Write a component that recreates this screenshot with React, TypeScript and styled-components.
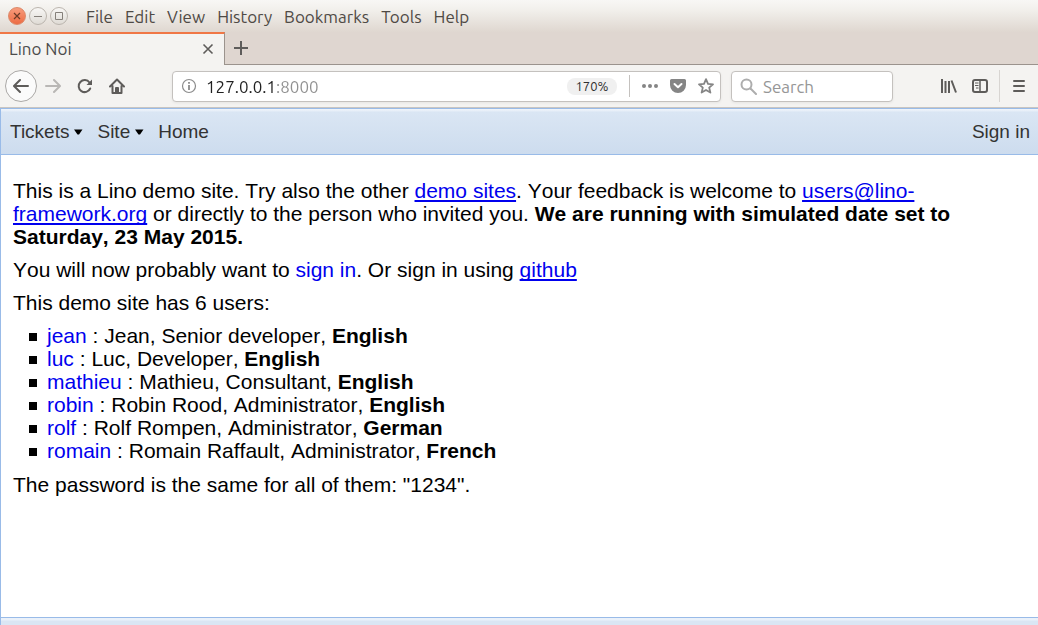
import React from "react";
import styled, { createGlobalStyle } from "styled-components";

const GlobalStyle = createGlobalStyle`
  * { box-sizing: border-box; }
  body { margin: 0; background: #fff; }
  button, input { font: inherit; color: inherit; }
`;

const uiFont = `"Ubuntu", "Noto Sans", sans-serif`;

const Window = styled.div`
  min-height: 100vh;
  display: flex;
  flex-direction: column;
  font-family: ${uiFont};
  font-size: 17px;
  line-height: 20px;
`;

const TitleBar = styled.header`
  height: 32px;
  display: flex;
  align-items: center;
  padding-left: 8px;
  background: linear-gradient(#f8f7f5, #f2f0ec 30%, #dfd7d0);
`;

const WindowButtons = styled.div`
  display: flex;
  gap: 3px;
  margin-right: 12px;
`;

const WindowButton = styled.button<{ $close?: boolean }>`
  width: 18px;
  height: 18px;
  padding: 0;
  display: grid;
  place-items: center;
  border: 1px solid ${(p) => (p.$close ? "#dc8868" : "#bbb5ae")};
  border-radius: 50%;
  color: ${(p) => (p.$close ? "#6b3a26" : "#85807a")};
  background: ${(p) =>
    p.$close ? "linear-gradient(#f79b7c, #ed6c43)" : "linear-gradient(#f8f7f5, #dfdbd5)"};
`;

const MenuBar = styled.nav`
  display: flex;
  align-items: center;
`;

const MenuItem = styled.button`
  border: 0;
  background: none;
  padding: 2px 6px 0;
  color: #4f4a45;
`;

const TabStrip = styled.div`
  height: 33px;
  display: flex;
  background: #dfd6d0;
`;

const Tab = styled.div`
  width: 225px;
  display: flex;
  align-items: center;
  justify-content: space-between;
  padding: 0 10px 1px 9px;
  border-top: 2px solid #f07746;
  border-right: 1px solid #9b938d;
  background: #f4f3f1;
  color: #4c4c4c;
`;

const StripRest = styled.div`
  flex: 1;
  display: flex;
  align-items: center;
  padding-left: 8px;
  border-bottom: 1px solid #9b938d;
`;

const IconButton = styled.button<{ $faded?: boolean }>`
  border: 0;
  padding: 0;
  background: none;
  display: grid;
  place-items: center;
  color: ${(p) => (p.$faded ? "#b9b7b5" : "#5e5c5a")};
`;

const NavBar = styled.div`
  height: 43px;
  display: flex;
  align-items: center;
  padding: 0 10px 0 5px;
  background: #f4f3f1;
  border-bottom: 1px solid #c9c5c1;
`;

const NavButtons = styled.div`
  display: flex;
  align-items: center;
  gap: 16px;
  width: 167px;
`;

const BackButton = styled(IconButton)`
  width: 32px;
  height: 32px;
  margin-right: -8px;
  border: 1px solid #aaa8a6;
  border-radius: 50%;
  background: #fbfbfb;
`;

const Field = styled.div`
  height: 31px;
  display: flex;
  align-items: center;
  border: 1px solid #c4c1be;
  border-radius: 4px;
  background: #fff;
  box-shadow: 0 1px 3px rgba(0, 0, 0, 0.06);
  color: #8b8b8b;
`;

const UrlField = styled(Field)`
  flex: 1;
  padding: 0 6px 0 8px;
`;

const SearchField = styled(Field)`
  width: 162px;
  margin: 0 47px 0 10px;
  padding-left: 8px;
`;

const TextInput = styled.input`
  flex: 1;
  min-width: 0;
  border: 0;
  outline: 0;
  padding: 1px 0 0;
  height: 25px;
  background: none;
  &::placeholder { color: #969696; opacity: 1; }
`;

const UrlInput = styled(TextInput)`
  margin-left: 9px;
  background: linear-gradient(90deg, #202020 70px, #909090 70px);
  background-clip: text;
  color: transparent;
  caret-color: #303030;
`;

const SearchInput = styled(TextInput)`
  margin-left: 6px;
`;

const Zoom = styled.button`
  height: 17px;
  width: 50px;
  margin-right: 12px;
  padding: 0;
  border: 0;
  border-radius: 8px;
  background: #f0f0f0;
  color: #303030;
  font-size: 13px;
  line-height: 17px;
`;

const Actions = styled.div`
  height: 22px;
  display: flex;
  align-items: center;
  gap: 12px;
  padding-left: 12px;
  border-left: 1px solid #c4c1be;
  button { color: #858585; }
`;

const Tools = styled.div`
  display: flex;
  align-items: center;
  gap: 14px;
`;

const MenuSlot = styled.div`
  height: 32px;
  display: flex;
  align-items: center;
  padding-left: 10px;
  margin-left: -3px;
  border-left: 1px solid #d8d5d2;
`;

const Page = styled.div`
  flex: 1;
  display: flex;
  flex-direction: column;
  border-left: 1px solid #99bbe8;
  border-top: 1px solid #99bbe8;
  font-family: "Liberation Sans", Arial, sans-serif;
  color: #000;
`;

const SiteBar = styled.nav`
  height: 46px;
  display: flex;
  align-items: center;
  gap: 14px;
  padding: 0 8px 0 9px;
  border-bottom: 1px solid #99bbe8;
  background: linear-gradient(#f0f5fb 0, #e6eef8 2px, #dae6f4 3px, #cddcee);
  font-size: 19px;
  line-height: 24px;
  color: #333;
`;

const SiteItem = styled.button`
  display: flex;
  align-items: center;
  gap: 4px;
  border: 0;
  padding: 0;
  background: none;
`;

const Spacer = styled.div`
  flex: 1;
`;

const Content = styled.main`
  flex: 1;
  padding: 24px 60px 0 12px;
  font-size: 21px;
  line-height: 23px;
  font-kerning: none;
`;

const Paragraph = styled.p`
  margin: 0 0 10px;
`;

const Link = styled.a<{ $plain?: boolean }>`
  color: #0000ee;
  text-decoration: ${(p) => (p.$plain ? "none" : "underline")};
  text-decoration-thickness: 2px;
  text-decoration-skip-ink: none;
  text-underline-offset: 2px;
`;

const UserList = styled.ul`
  margin: 0 0 11px;
  padding: 0;
  list-style: none;
`;

const User = styled.li`
  display: flex;
  align-items: center;
  padding-left: 16px;
  &::before {
    content: "";
    width: 8px;
    height: 8px;
    margin: 2px 10px 0 0;
    background: #000;
  }
`;

const BottomBar = styled.footer`
  height: 8px;
  border-top: 1px solid #99bbe8;
  background: linear-gradient(#eaf1fa 2px, #dae6f4 3px);
`;

const Svg = ({ size = 16, children }: { size?: number; children: React.ReactNode }) => (
  <svg width={size} height={size} viewBox={`0 0 ${size} ${size}`} fill="none" stroke="currentColor"
    strokeWidth="2" strokeLinecap="round" strokeLinejoin="round" aria-hidden="true">
    {children}
  </svg>
);

const Caret = () => (
  <svg width="10" height="6" viewBox="0 0 10 6" aria-hidden="true">
    <path d="M1 0.500h8.500L6 5.500H4.500z" fill="#000" />
  </svg>
);

const menus = ["File", "Edit", "View", "History", "Bookmarks", "Tools", "Help"];

const users = [
  { login: "jean", about: "Jean, Senior developer", language: "English" },
  { login: "luc", about: "Luc, Developer", language: "English" },
  { login: "mathieu", about: "Mathieu, Consultant", language: "English" },
  { login: "robin", about: "Robin Rood, Administrator", language: "English" },
  { login: "rolf", about: "Rolf Rompen, Administrator", language: "German" },
  { login: "romain", about: "Romain Raffault, Administrator", language: "French" },
];

export default function App() {
  return (
    <Window>
      <GlobalStyle />
      <TitleBar>
        <WindowButtons>
          <WindowButton $close aria-label="Close window">
            <svg width="8" height="8" viewBox="0 0 8 8"><path d="M1 1l6 6M7 1L1 7" stroke="currentColor" strokeWidth="1.2" /></svg>
          </WindowButton>
          <WindowButton aria-label="Minimize window">
            <svg width="8" height="8" viewBox="0 0 8 8"><path d="M0 4.5h8" stroke="currentColor" /></svg>
          </WindowButton>
          <WindowButton aria-label="Maximize window">
            <svg width="8" height="8" viewBox="0 0 8 8"><path d="M.5.5h7v7h-7z" stroke="currentColor" fill="none" /></svg>
          </WindowButton>
        </WindowButtons>
        <MenuBar>
          {menus.map((m) => <MenuItem key={m}>{m}</MenuItem>)}
        </MenuBar>
      </TitleBar>

      <TabStrip>
        <Tab>
          Lino Noi
          <IconButton aria-label="Close tab">
            <svg width="12" height="12" viewBox="0 0 12 12"><path d="M1.5 1.5l9 9M10.5 1.5l-9 9" stroke="currentColor" strokeWidth="1.6" /></svg>
          </IconButton>
        </Tab>
        <StripRest>
          <IconButton aria-label="New tab">
            <svg width="16" height="16" viewBox="0 0 16 16"><path d="M8 1v14M1 8h14" stroke="currentColor" strokeWidth="2" /></svg>
          </IconButton>
        </StripRest>
      </TabStrip>

      <NavBar>
        <NavButtons>
          <BackButton aria-label="Back"><Svg><path d="M15 8H1.5M7 2L1 8l6 6" /></Svg></BackButton>
          <IconButton $faded aria-label="Forward"><Svg><path d="M1 8h13.500M9 2l6 6-6 6" /></Svg></IconButton>
          <IconButton aria-label="Reload">
            <Svg><path d="M13.200 10.500A6 6 0 1 1 12.500 4.500" /><path d="M15 1.500V7H9.500z" fill="currentColor" stroke="none" /></Svg>
          </IconButton>
          <IconButton aria-label="Home">
            <Svg><path d="M1 8.500L8 1.500l7 7M3.500 8v7h9V8" /><path d="M7 14v-4h2v4" /></Svg>
          </IconButton>
        </NavButtons>
        <UrlField>
          <svg width="16" height="16" viewBox="0 0 16 16" fill="none" stroke="currentColor" aria-hidden="true">
            <circle cx="8" cy="8" r="6.500" strokeWidth="1.200" /><path d="M8 7v5M8 4v1.800" strokeWidth="1.800" />
          </svg>
          <UrlInput aria-label="Address" defaultValue="127.0.0.1:8000" />
          <Zoom>170%</Zoom>
          <Actions>
            <IconButton aria-label="Page actions">
              <svg width="16" height="16" viewBox="0 0 16 16" fill="currentColor"><circle cx="2" cy="8" r="2" /><circle cx="8" cy="8" r="2" /><circle cx="14" cy="8" r="2" /></svg>
            </IconButton>
            <IconButton aria-label="Save to Pocket">
              <svg width="16" height="16" viewBox="0 0 16 16"><path d="M1.500 1h13A1.500 1.500 0 0 1 16 2.500V7A8 8 0 0 1 0 7V2.500A1.500 1.500 0 0 1 1.500 1z" fill="currentColor" /><path d="M4.500 6L8 9.200 11.500 6" fill="none" stroke="#fff" strokeWidth="2" strokeLinecap="round" strokeLinejoin="round" /></svg>
            </IconButton>
            <IconButton aria-label="Bookmark this page">
              <svg width="16" height="16" viewBox="0 0 16 16" fill="none" stroke="currentColor" strokeWidth="1.800" strokeLinejoin="round"><path d="M8 1.200l2 4.600 5 .5-3.800 3.300 1.200 5L8 12l-4.400 2.600 1.200-5L1 6.300l5-.5z" /></svg>
            </IconButton>
          </Actions>
        </UrlField>
        <SearchField>
          <svg width="17" height="17" viewBox="0 0 17 17" fill="none" stroke="#adadad" strokeWidth="2" strokeLinecap="round" aria-hidden="true">
            <circle cx="6.500" cy="6.500" r="5" /><path d="M10.500 10.500L16 16" />
          </svg>
          <SearchInput aria-label="Search" placeholder="Search" />
        </SearchField>
        <Tools>
          <IconButton aria-label="Library">
            <svg width="18" height="16" viewBox="0 0 18 16" stroke="currentColor" strokeWidth="2"><path d="M2 1v14M5.500 3v12M9 3v12M11.500 2.500L16 14.500" /></svg>
          </IconButton>
          <IconButton aria-label="Sidebars">
            <svg width="16" height="16" viewBox="0 0 16 16" fill="none" stroke="currentColor"><rect x="1" y="2" width="14" height="12" rx="2" strokeWidth="2" /><path d="M8 2v12" strokeWidth="1.500" /><path d="M3 5h3.500M3 7.500h3.500M4 10h2.500" /></svg>
          </IconButton>
          <MenuSlot>
            <IconButton aria-label="Open menu">
              <svg width="18" height="16" viewBox="0 0 18 16" stroke="currentColor" strokeWidth="2" strokeLinecap="round"><path d="M4 3h10M4 8h10M4 13h10" /></svg>
            </IconButton>
          </MenuSlot>
        </Tools>
      </NavBar>

      <Page>
        <SiteBar>
          <SiteItem>Tickets<Caret /></SiteItem>
          <SiteItem>Site<Caret /></SiteItem>
          <SiteItem>Home</SiteItem>
          <Spacer />
          <SiteItem>Sign in</SiteItem>
        </SiteBar>
        <Content>
          <Paragraph>
            This is a Lino demo site. Try also the other <Link href="#demo">demo sites</Link>. Your
            feedback is welcome to <Link href="mailto:users@lino-framework.org">users@lino-framework.org</Link> or
            directly to the person who invited you.{" "}
            <b>We are running with simulated date set to Saturday, 23 May 2015.</b>
          </Paragraph>
          <Paragraph>
            You will now probably want to <Link $plain href="#signin">sign in</Link>. Or sign in
            using <Link href="#github">github</Link>
          </Paragraph>
          <Paragraph>This demo site has 6 users:</Paragraph>
          <UserList>
            {users.map((u) => (
              <User key={u.login}>
                <span>
                  <Link $plain href={`#${u.login}`}>{u.login}</Link> : {u.about}, <b>{u.language}</b>
                </span>
              </User>
            ))}
          </UserList>
          <Paragraph>The password is the same for all of them: "1234".</Paragraph>
        </Content>
        <BottomBar />
      </Page>
    </Window>
  );
}
